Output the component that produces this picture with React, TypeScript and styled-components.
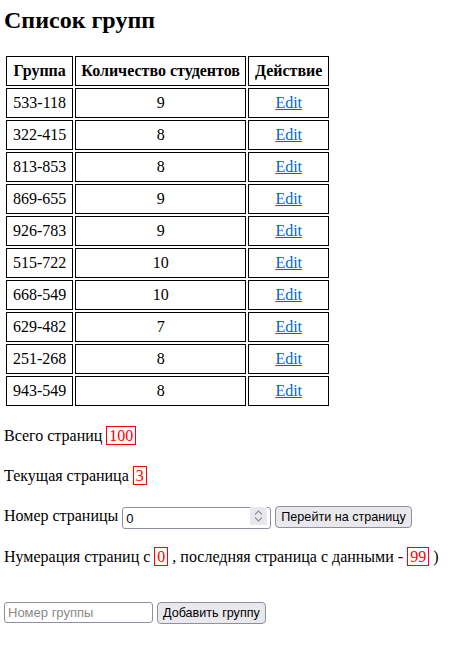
import React from "react";
import styled, { createGlobalStyle } from "styled-components";

const Global = createGlobalStyle`
  html, body { margin: 0; padding: 0; background: #fff; }
  body {
    font-family: "Liberation Serif", "Times New Roman", serif;
    font-size: 16px;
    line-height: 24px;
    color: #000;
  }
`;

const Page = styled.div`
  padding: 0 4px;
`;

const Title = styled.h2`
  font-size: 24px;
  font-weight: bold;
  line-height: 28px;
  margin: 6px 0 20px 0;
`;

const Table = styled.table`
  border-collapse: separate;
  border-spacing: 2px;
  margin: 0;
`;

const HeadCell = styled.th<{ $tight?: boolean }>`
  border: 1px solid #000;
  padding: ${(p) => (p.$tight ? "2px 5px" : "2px 6px")};
  font-weight: bold;
  text-align: center;
  line-height: 24px;
`;

const Cell = styled.td`
  border: 1px solid #000;
  padding: 2px 6px;
  text-align: center;
  line-height: 24px;
`;

const EditLink = styled.a`
  color: #0066cc;
  text-decoration: underline;
  cursor: pointer;
`;

const Line = styled.p`
  margin: 16px 0;
  line-height: 24px;
  white-space: nowrap;
`;

const Mark = styled.span`
  color: red;
  border: 1px solid red;
  padding: 0 2px;
`;

const NumberWrap = styled.span`
  position: relative;
  display: inline-block;
  vertical-align: middle;
`;

const NumberInput = styled.input`
  box-sizing: border-box;
  width: 149px;
  height: 22px;
  padding: 0 20px 0 3px;
  border: 1px solid #8f8f9d;
  border-radius: 3px;
  font-family: "Liberation Sans", Arial, sans-serif;
  font-size: 13px;
  color: #000;
  background: #fff;
  vertical-align: middle;
  -moz-appearance: textfield;
  appearance: textfield;
  &::-webkit-inner-spin-button,
  &::-webkit-outer-spin-button {
    -webkit-appearance: none;
    margin: 0;
  }
`;

const Spinner = styled.span`
  position: absolute;
  right: 4px;
  top: 2px;
  width: 17px;
  height: 18px;
  background: #e9e9ed;
  display: flex;
  flex-direction: column;
  align-items: center;
  justify-content: center;
  gap: 2px;
  pointer-events: none;
`;

const TextInput = styled.input`
  box-sizing: border-box;
  width: 149px;
  height: 21px;
  padding: 0 3px;
  border: 1px solid #8f8f9d;
  border-radius: 3px;
  font-family: "Liberation Sans", Arial, sans-serif;
  font-size: 13px;
  color: #000;
  background: #fff;
  vertical-align: middle;
  &::placeholder { color: #8a8a8a; }
`;

const Button = styled.button`
  box-sizing: border-box;
  height: 22px;
  padding: 0 5px;
  border: 1px solid #8f8f9d;
  border-radius: 4px;
  background: #e9e9ed;
  font-family: "Liberation Sans", Arial, sans-serif;
  font-size: 12.6px;
  color: #000;
  vertical-align: middle;
  cursor: pointer;
`;

const AddForm = styled.div`
  margin-top: 30px;
  line-height: 24px;
  white-space: nowrap;
`;

const Chevron = ({ up }: { up?: boolean }) => (
  <svg width="9" height="5" viewBox="0 0 9 5">
    <path
      d={up ? "M1 4.5 L4.5 1 L8 4.5" : "M1 0.5 L4.5 4 L8 0.5"}
      fill="none"
      stroke="#8f8f9d"
      strokeWidth="1.2"
    />
  </svg>
);

const rows: [string, number][] = [
  ["533-118", 9],
  ["322-415", 8],
  ["813-853", 8],
  ["869-655", 9],
  ["926-783", 9],
  ["515-722", 10],
  ["668-549", 10],
  ["629-482", 7],
  ["251-268", 8],
  ["943-549", 8],
];

export default function App() {
  return (
    <Page>
      <Global />
      <Title>Список групп</Title>
      <Table>
        <thead>
          <tr>
            <HeadCell>Группа</HeadCell>
            <HeadCell $tight>Количество студентов</HeadCell>
            <HeadCell>Действие</HeadCell>
          </tr>
        </thead>
        <tbody>
          {rows.map(([g, n]) => (
            <tr key={g}>
              <Cell>{g}</Cell>
              <Cell>{n}</Cell>
              <Cell>
                <EditLink href="#">Edit</EditLink>
              </Cell>
            </tr>
          ))}
        </tbody>
      </Table>
      <Line>
        Всего страниц <Mark>100</Mark>
      </Line>
      <Line>
        Текущая страница <Mark>3</Mark>
      </Line>
      <Line>
        Номер страницы{" "}
        <NumberWrap>
          <NumberInput type="number" defaultValue={0} />
          <Spinner>
            <Chevron up />
            <Chevron />
          </Spinner>
        </NumberWrap>{" "}
        <Button>Перейти на страницу</Button>
      </Line>
      <Line>
        Нумерация страниц с <Mark>0</Mark> , последняя страница с данными - <Mark>99</Mark> )
      </Line>
      <AddForm>
        <TextInput placeholder="Номер группы" /> <Button>Добавить группу</Button>
      </AddForm>
    </Page>
  );
}
